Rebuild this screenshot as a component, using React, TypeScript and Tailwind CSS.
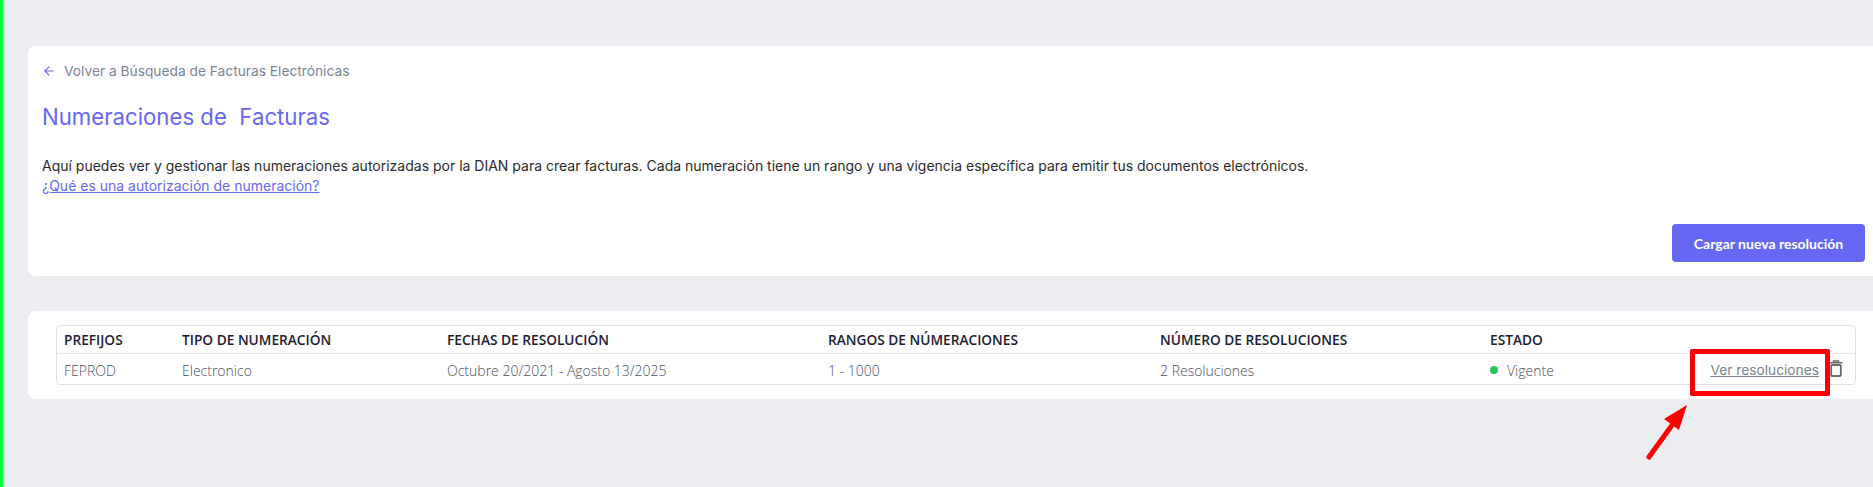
import { ArrowLeft } from 'lucide-react';

const headers = [
  'PREFIJOS',
  'TIPO DE NUMERACIÓN',
  'FECHAS DE RESOLUCIÓN',
  'RANGOS DE NÚMERACIONES',
  'NÚMERO DE RESOLUCIONES',
  'ESTADO',
];

const columns = 'grid grid-cols-[118px_265px_381px_332px_330px_1fr] pl-[7px] pt-[2px] items-center';

export default function App() {
  return (
    <div className="relative h-[487px] overflow-hidden bg-[#ecedf1] border-l-[3px] border-[#00ff3c] font-['Inter',sans-serif]">
      <div className="pt-[46px] pl-[25px]">
        {/* Header card */}
        <section className="h-[230px] bg-white rounded-l-lg pl-[14px] pr-2 flex flex-col">
          <a className="mt-[15px] flex items-center h-[20px] text-[13.75px] text-[#7c8494]">
            <ArrowLeft className="w-[14px] h-[14px] text-[#6767f5] mr-2" strokeWidth={2} />
            Volver a Búsqueda de Facturas Electrónicas
          </a>
          <h1 className="mt-[21px] text-[22.2px] leading-[30px] text-[#6767f5] whitespace-pre">
            Numeraciones de  Facturas
          </h1>
          <p className="mt-[24px] text-[14px] leading-[20px] text-[#2b2b2b]">
            Aquí puedes ver y gestionar las numeraciones autorizadas por la DIAN para crear facturas. Cada numeración tiene un rango y una vigencia específica para emitir tus documentos electrónicos.
            <br />
            <a className="text-[#6767f5] underline">¿Qué es una autorización de numeración?</a>
          </p>
          <div className="mt-[28px] flex justify-end">
            <button className="w-[193px] h-[38px] rounded bg-[#6767f5] text-white text-[14px] font-bold font-['Lato',sans-serif]">
              Cargar nueva resolución
            </button>
          </div>
        </section>

        {/* Table card */}
        <section className="mt-[35px] h-[88px] bg-white rounded-l-lg pt-[14px] pl-[28px] pr-[17px] font-['Open_Sans',sans-serif]">
          <div className="h-[60px] border border-[#dfe0e3] rounded">
            <div className={`${columns} h-[28px] border-b border-[#e6e7ea] text-[13.7px] font-semibold text-[#1b2130]`}>
              {headers.map((h) => (
                <span key={h}>{h}</span>
              ))}
            </div>
            <div className={`${columns} relative h-[30px] text-[14px] font-light text-[#4a505f]`}>
              <span>FEPROD</span>
              <span>Electronico</span>
              <span>Octubre 20/2021 - Agosto 13/2025</span>
              <span>1 - 1000</span>
              <span>2 Resoluciones</span>
              <span className="flex items-center">
                <span className="w-[8px] h-[8px] rounded-full bg-[#22c55e] mr-[9px]" />
                Vigente
              </span>
              <a className="absolute right-[36px] top-[5px] font-['Inter',sans-serif] font-normal text-[13.75px] leading-[22px] text-[#7c8494] underline">
                Ver resoluciones
              </a>
              <svg className="absolute right-[12px] top-[6px] w-[14px] h-[17px]" viewBox="0 0 14 17" fill="none" stroke="#6b6b6b" strokeWidth="1.5">
                <path d="M0.5 2.8h13M4.5 2.8V1h5v1.8" />
                <rect x="2.2" y="5" width="9.6" height="11" rx="0.8" strokeWidth="1.8" />
              </svg>
            </div>
          </div>
        </section>
      </div>

      {/* Red annotation */}
      <div className="absolute left-[1687px] top-[349px] w-[140px] h-[47px] border-[5px] border-[#ff0000] rounded-[2px]" />
      <svg className="absolute left-[1637px] top-[400px] w-[60px] h-[62px]" viewBox="0 0 60 62" fill="none">
        <path d="M9 57 L35 21" stroke="#ff0000" strokeWidth="5" strokeLinecap="round" />
        <path d="M47 5 L24 19 L39 30 Z" fill="#ff0000" />
      </svg>
    </div>
  );
}
